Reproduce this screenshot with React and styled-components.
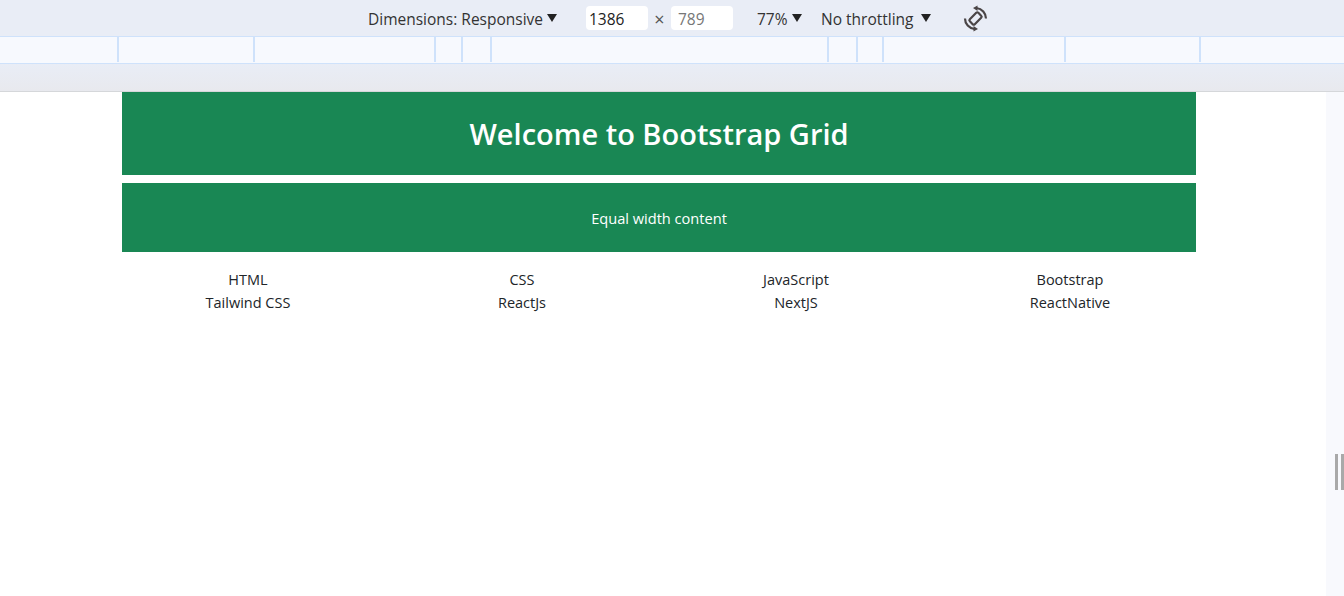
import styled, { createGlobalStyle } from "styled-components";

const FONT = `"Open Sans", "Noto Sans", "Liberation Sans", sans-serif`;
const GREEN = "#198754";
const RULER_SEGMENTS = [119, 136, 181, 27, 29, 337, 29, 26, 182, 135];
const TECH = [
  "HTML",
  "CSS",
  "JavaScript",
  "Bootstrap",
  "Tailwind CSS",
  "ReactJs",
  "NextJS",
  "ReactNative",
];

export default function App() {
  return (
    <Screen>
      <GlobalStyle />
      <Toolbar>
        <ToolLabel $width={174}>Dimensions: Responsive</ToolLabel>
        <Caret $left={5} />
        <SizeInput $left={29}>1386</SizeInput>
        <Times>×</Times>
        <SizeInput $muted>789</SizeInput>
        <ToolLabel $left={24} $width={32}>
          77%
        </ToolLabel>
        <Caret $left={3} />
        <ToolLabel $left={19} $width={94}>
          No throttling
        </ToolLabel>
        <Caret $left={6} />
        <RotateIcon />
      </Toolbar>
      <Ruler>
        {RULER_SEGMENTS.map((width, i) => (
          <RulerSegment key={i} $width={width} />
        ))}
      </Ruler>
      <Backdrop />
      <Viewport>
        <Page>
          <Container>
            <Heading>Welcome to Bootstrap Grid</Heading>
            <Subheading>Equal width content</Subheading>
            <TechGrid>
              {TECH.map((name) => (
                <TechItem key={name}>{name}</TechItem>
              ))}
            </TechGrid>
          </Container>
        </Page>
        <Scrollbar>
          <Grip />
          <Grip />
        </Scrollbar>
      </Viewport>
    </Screen>
  );
}

function RotateIcon() {
  const half = (
    <>
      <path d="M23 12.5A10.5 10.5 0 0 0 13.5 2" stroke="#4a4546" strokeWidth="2.2" />
      <path d="M14.5 -0.5V5L10 2z" fill="#4a4546" />
    </>
  );
  return (
    <RotateSvg viewBox="0 0 25 25" fill="none">
      <rect
        x="9"
        y="6.5"
        width="7"
        height="12"
        rx="1.5"
        transform="rotate(45 12.5 12.5)"
        stroke="#4a4546"
        strokeWidth="2.2"
      />
      {half}
      <g transform="rotate(180 12.5 12.5)">{half}</g>
    </RotateSvg>
  );
}

const GlobalStyle = createGlobalStyle`
  html, body {
    margin: 0;
    height: 100%;
    overflow: hidden;
    background: #fff;
  }
`;

const Screen = styled.div`
  display: flex;
  flex-direction: column;
  height: 596px;
  font-family: ${FONT};
`;

const Toolbar = styled.div`
  display: flex;
  align-items: center;
  height: 36px;
  padding-left: 368px;
  box-sizing: border-box;
  background: #e9edf6;
  color: #333;
  font-size: 15.5px;
`;

const ToolLabel = styled.span`
  width: ${(p) => p.$width}px;
  margin-left: ${(p) => p.$left || 0}px;
  margin-top: 2px;
  white-space: nowrap;
`;

const Caret = styled.span`
  width: 0;
  height: 0;
  margin-left: ${(p) => p.$left}px;
  border-left: 5.5px solid transparent;
  border-right: 5.5px solid transparent;
  border-top: 8px solid #222;
`;

const SizeInput = styled.span`
  width: 62px;
  height: 24px;
  margin-left: ${(p) => p.$left || 0}px;
  padding-left: ${(p) => (p.$muted ? 7 : 3)}px;
  box-sizing: border-box;
  border-radius: 4px;
  background: #fff;
  color: ${(p) => (p.$muted ? "#777" : "#222")};
  line-height: 26px;
`;

const Times = styled.span`
  width: 23px;
  margin-top: 2px;
  text-align: center;
  color: #555;
  font-size: 18px;
`;

const RotateSvg = styled.svg`
  width: 25px;
  height: 25px;
  margin-left: 32px;
  overflow: visible;
`;

const Ruler = styled.div`
  display: flex;
  height: 28px;
  box-sizing: border-box;
  background: #f7f9fe;
  border-top: 1px solid #cfe2fb;
  border-bottom: 1px solid #cfe2fb;
`;

const RulerSegment = styled.div`
  width: ${(p) => p.$width}px;
  height: 25px;
  box-sizing: border-box;
  border-right: 2px solid #cfe2fb;
`;

const Backdrop = styled.div`
  height: 28px;
  box-sizing: border-box;
  background: linear-gradient(#e9edf6, #e8e9ee);
  border-bottom: 1px solid #d5d7da;
`;

const Viewport = styled.div`
  display: flex;
  flex: 1;
  min-height: 0;
`;

const Page = styled.main`
  flex: 1;
  padding-left: 122px;
  background: #fff;
`;

const Container = styled.div`
  width: 1074px;
`;

const Heading = styled.h1`
  height: 83px;
  margin: 0 0 8px;
  background: ${GREEN};
  color: #fff;
  font-size: 29px;
  font-weight: 600;
  line-height: 84px;
  text-align: center;
`;

const Subheading = styled.p`
  height: 69px;
  margin: 0;
  background: ${GREEN};
  color: #fff;
  font-size: 14.6px;
  line-height: 70px;
  text-align: center;
`;

const TechGrid = styled.div`
  display: grid;
  grid-template-columns: repeat(4, 274px);
  grid-auto-rows: 23px;
  margin: 16px -11px 0;
`;

const TechItem = styled.div`
  color: #212529;
  font-size: 14.5px;
  line-height: 23px;
  text-align: center;
`;

const Scrollbar = styled.aside`
  display: flex;
  justify-content: flex-end;
  gap: 3px;
  width: 18px;
  padding-top: 362px;
  box-sizing: border-box;
  background: #f8f9fd;
`;

const Grip = styled.span`
  width: 3px;
  height: 36px;
  background: #a9a9a9;
`;
